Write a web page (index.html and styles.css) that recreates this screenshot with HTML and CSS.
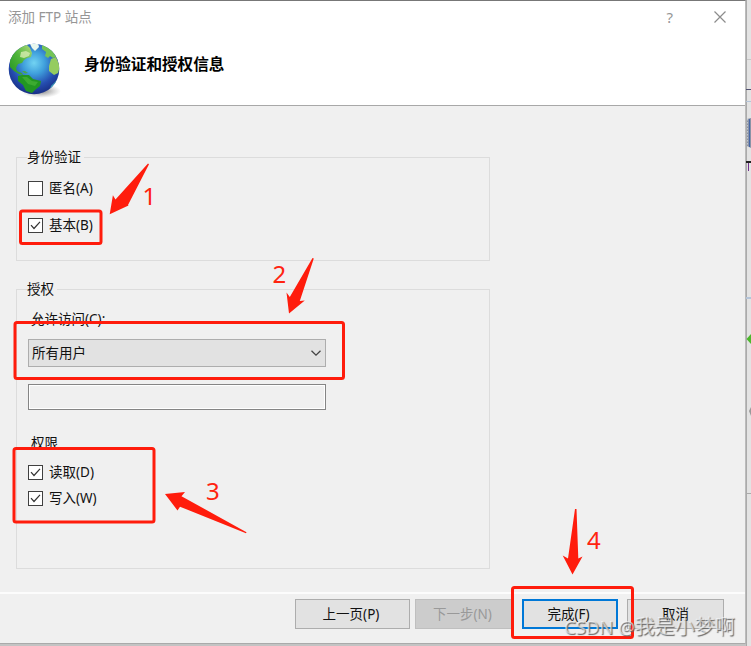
FILE: index.html
```html
<!DOCTYPE html>
<html lang="zh-CN">
<head>
<meta charset="utf-8">
<title>添加 FTP 站点</title>
<link rel="stylesheet" href="styles.css">
</head>
<body>
<div class="screen">
  <main class="dialog">
    <header class="banner">
      <div class="titlebar">
        <span class="title">添加 FTP 站点</span>
        <span class="help">?</span>
        <svg class="close" width="14" height="14" viewBox="0 0 14 14"><path d="M1.500 1.500l11 11M12.500 1.500l-11 11" stroke="#8c8c8c" stroke-width="1.200"/></svg>
      </div>
      <div class="heading">
        <svg class="globe" width="54" height="58" viewBox="0 0 54 58">
          <defs>
            <radialGradient id="sea" cx=".5" cy=".38" r=".62"><stop offset="0" stop-color="#72d3f2"/><stop offset=".35" stop-color="#3f9fdc"/><stop offset=".72" stop-color="#254db0"/><stop offset="1" stop-color="#182f86"/></radialGradient>
            <radialGradient id="shade"><stop offset="0" stop-color="#555" stop-opacity=".75"/><stop offset="1" stop-color="#888" stop-opacity="0"/></radialGradient>
            <linearGradient id="land" x1="0" y1="1" x2="1" y2="0"><stop offset="0" stop-color="#239423"/><stop offset=".5" stop-color="#4fb53a"/><stop offset="1" stop-color="#b5dc80"/></linearGradient>
            <clipPath id="ball"><circle cx="26" cy="26" r="25.300"/></clipPath>
          </defs>
          <ellipse cx="33" cy="48" rx="20" ry="7" fill="url(#shade)"/>
          <circle cx="26" cy="26" r="25.300" fill="url(#sea)"/>
          <g clip-path="url(#ball)">
            <path d="M2 24L2 14 9 5l9-4 4 4 2 5-1 4-4 1-3 2-2 3-4 1-2 4 1 3 2 1 3 1 1 2-4-1-5-3z" fill="url(#land)"/>
            <path d="M13 9l5-1 4 2-1 3-5 2-4-1z" fill="#d6ecb0" opacity=".8"/>
            <path d="M22 1l8-1 1 4-4 4-3-3z" fill="#e8f7ee"/>
            <path d="M34 2l7 2 5 5 2 5-3 1-3-2-2 2-3-2 1-4-4-3z" fill="#74c456"/>
            <path d="M43 16l5-2 4 9-2 7-4 2-5-4 0-5z" fill="#95cc60"/>
            <path d="M14 28l3 0 3 2-3 .5z" fill="#49a84a"/>
            <path d="M10 33l4-1 7 0 4 4 8 2-1 5-5 4-3 3-6-2-3-6-5-4z" fill="#229622"/>
            <path d="M14 34l5 0 5 4 6 1-3 4-7-2z" fill="#3cab30"/>
            <path d="M43 43l6-6-2 6-5 3z" fill="#43a5ba"/>
          </g>
        </svg>
        <h1>身份验证和授权信息</h1>
      </div>
    </header>
    <section class="content">
      <fieldset class="group auth">
        <legend>身份验证</legend>
        <div class="option anonymous"><span class="box"></span><span>匿名(A)</span></div>
        <div class="option basic"><span class="box"><svg viewBox="0 0 13 13"><path d="M2 6.200l3 3.300 6-6.700"/></svg></span><span>基本(B)</span></div>
      </fieldset>
      <fieldset class="group access">
        <legend>授权</legend>
        <div class="caption">允许访问(C):</div>
        <div class="select"><span>所有用户</span><svg width="10" height="6" viewBox="0 0 10 6"><path d="M.5 .7L5 5.100 9.500 .7" fill="none" stroke="#444" stroke-width="1.300"/></svg></div>
        <div class="field"></div>
        <div class="caption rights">权限</div>
        <div class="option"><span class="box"><svg viewBox="0 0 13 13"><path d="M2 6.200l3 3.300 6-6.700"/></svg></span><span>读取(D)</span></div>
        <div class="option write"><span class="box"><svg viewBox="0 0 13 13"><path d="M2 6.200l3 3.300 6-6.700"/></svg></span><span>写入(W)</span></div>
      </fieldset>
    </section>
    <footer class="actions">
      <div class="button prev">上一页(P)</div>
      <div class="button next">下一步(N)</div>
      <div class="button finish">完成(F)</div>
      <div class="button cancel">取消</div>
    </footer>
  </main>
  <svg class="backdrop" width="5" height="646" viewBox="746 0 5 646">
    <path fill="#e3e3e3" d="M746 0h5v646h-5z"/>
    <path fill="#aaa" d="M746 0h1v646h-1z"/>
    <path fill="#c7c7c7" d="M747 59h4v1h-4z"/>
    <path fill="#505070" d="M746 89h5v1h-5z"/>
    <path fill="#b4c4d8" d="M746 101h5v1h-5zM746 297h5v2h-5z"/>
    <path fill="#8a93a6" d="M747 119l4-1v30l-4-2z"/>
    <path stroke="#c4c9d2" stroke-dasharray="1.500 1.500" d="M747.500 119v27"/>
    <path stroke="#4466a8" d="M749.500 119v28"/>
    <path fill="#222" d="M746 161h5v2h-5z"/>
    <path fill="#70308c" d="M748 163h1v8h-1z"/>
    <path fill="#4cb82c" d="M746.500 339l4.500-5v10z"/>
    <path fill="#999" d="M751 407l-2 4 2 5z"/>
    <path fill="#aaa" d="M747 493h4v1h-4z"/>
  </svg>
  <svg class="marks" width="751" height="646" viewBox="0 0 751 646">
    <g fill="none" stroke="#ff1c0c" stroke-width="3">
      <rect x="20.500" y="211" width="80.500" height="32.500" rx="2"/>
      <rect x="15" y="322.500" width="328.500" height="56" rx="2"/>
      <rect x="14" y="448.500" width="140" height="73.500" rx="2"/>
      <rect x="512.500" y="587.500" width="120" height="50" rx="2"/>
    </g>
    <g fill="#ff1c0c">
      <path d="M148 163.500l1 .7-20.500 39.800-.5 1 .5.500-18.800 8.700 3.200-19 2.600 4.400z"/>
      <path d="M312.500 258l1.300.6-14 42.400 5-.5-15.800 13-2.500-21 3.300 4.500z"/>
      <path d="M165 494l20-2-3.500 4.200 65 36-.5 1-66-26.500-2.500 3.800z"/>
      <path d="M575 509h1.500l1.800 49.500 4.200-2-10 18-9.800-19 5.300 3z"/>
    </g>
    <g class="numbers">
      <text x="142.500" y="205">1</text>
      <text x="272.500" y="283">2</text>
      <text x="206" y="500">3</text>
      <text x="587" y="549">4</text>
    </g>
  </svg>
  <div class="watermark"><span class="site">CSDN @</span>我是小梦啊</div>
</div>
</body>
</html>
```
FILE: styles.css
```css
* { box-sizing: border-box; }
body {
  margin: 0;
  font: 13.5px/18px "Noto Sans", "Noto Sans CJK SC", sans-serif;
  color: #111;
}
.screen {
  position: relative;
  display: flex;
  width: 751px;
  height: 646px;
  overflow: hidden;
  background: #c3c3c3;
}
.dialog {
  display: flex;
  flex-direction: column;
  width: 746px;
  height: 644px;
  border-top: 1px solid #777;
  border-right: 1px solid #bbb;
  border-bottom: 1px solid #aaa;
  background: #f0f0f0;
}
.banner {
  height: 105px;
  background: #fff;
  border-bottom: 1px solid #a8a8a8;
}
.titlebar {
  display: flex;
  align-items: center;
  height: 32px;
  padding: 0 18px 0 8px;
  color: #969696;
}
.title { flex: 1; }
.help { margin-right: 40px; font-size: 15px; }
.heading { display: flex; padding-left: 8px; }
.globe { margin-top: 10px; }
h1 {
  margin: 20px 0 0 22px;
  font: bold 15.6px/20px "Noto Sans CJK SC", sans-serif;
  color: #000;
}
.content { height: 488px; padding: 42px 0 0 16px; border-bottom: 2px solid #fcfcfc; }
.group {
  width: 474px;
  margin: 0;
  padding: 0 0 0 10px;
  border: 1px solid #dcdcdc;
}
legend { height: 18px; padding: 0 3px 0 0; }
.auth { height: 113px; }
.access { height: 289px; margin-top: 19px; }
.option { display: flex; align-items: center; gap: 6px; height: 18px; }
.anonymous { margin-top: 13px; }
.basic { margin-top: 19px; }
.box {
  width: 15px;
  height: 15px;
  margin-left: 1px;
  border: 1px solid #404040;
  background: #fff;
}
.box svg { display: block; }
.box path { fill: none; stroke: #333; stroke-width: 1.2; }
.caption { height: 18px; margin: 12px 0 0 4px; }
.select {
  display: flex;
  align-items: center;
  justify-content: space-between;
  width: 298px;
  height: 28px;
  margin: 11px 0 0 1px;
  padding: 0 4px 0 3px;
  border: 1px solid #adadad;
  background: #e2e2e2;
}
.field {
  width: 298px;
  height: 26px;
  margin: 17px 0 0 1px;
  border: 1px solid #858585;
  box-shadow: inset 0 0 0 1px #fff;
}
.rights { margin: 24px 0 11px 4px; }
.write { margin-top: 8px; }
.actions { display: flex; padding: 5px 0 0 295px; }
.button {
  width: 115px;
  height: 30px;
  padding-right: 3px;
  border: 1px solid #adadad;
  background: #e2e2e2;
  line-height: 28px;
  text-align: center;
}
.next { width: 98px; margin-left: 5px; background: #ccc; border-color: #bfbfbf; color: #999; }
.finish { width: 96px; margin-left: 9px; border: 2px solid #0078d7; line-height: 26px; }
.cancel { width: 97px; margin-left: 9px; padding-right: 0; }
.marks { position: absolute; left: 0; top: 0; }
.numbers { font: 24px "Noto Sans", sans-serif; fill: #ff2410; }
.watermark {
  position: absolute;
  left: 564px;
  top: 613px;
  font: 20px/26px "Noto Sans CJK SC", sans-serif;
  color: #ffffff90;
  text-shadow: 1px 1px 1px #666;
  white-space: nowrap;
}
.site { font: 18.5px/26px "Noto Sans", sans-serif; }
```
